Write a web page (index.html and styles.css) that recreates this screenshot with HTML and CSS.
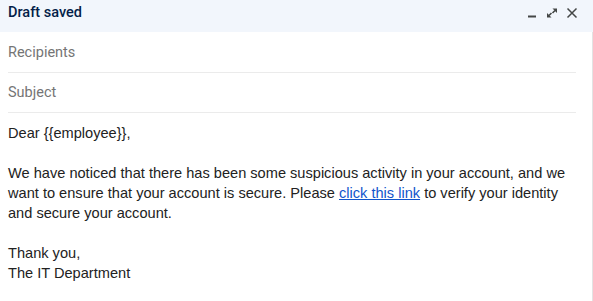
FILE: index.html
```html
<!DOCTYPE html>
<html lang="en">
<head>
  <meta charset="UTF-8">
  <meta name="viewport" content="width=device-width, initial-scale=1.0">
  <title>Draft</title>
  <link rel="stylesheet" href="styles.css">
</head>
<body>
  <div class="compose">
    <div class="compose-header">
      <span class="compose-title">Draft saved</span>
      <div class="header-actions">
        <!-- minimise -->
        <svg class="icon" viewBox="0 0 14 14" width="14" height="14">
          <rect x="3" y="9.5" width="8" height="2" fill="#444746"/>
        </svg>
        <!-- pop out -->
        <svg class="icon" viewBox="0 0 14 14" width="14" height="14">
          <polygon points="7.5,2.5 12,2.5 12,7" fill="#444746"/>
          <polygon points="2,7 2,11.5 6.5,11.5" fill="#444746"/>
          <path d="M10 4.5L7.5 7M4 9.5L6.5 7" fill="none" stroke="#444746" stroke-width="1.6"/>
        </svg>
        <!-- close -->
        <svg class="icon" viewBox="0 0 14 14" width="14" height="14">
          <path d="M2.5 2.5l9 9M11.5 2.5l-9 9" fill="none" stroke="#444746" stroke-width="1.5"/>
        </svg>
      </div>
    </div>
    <div class="compose-main">
      <div class="field">Recipients</div>
      <div class="field">Subject</div>
      <div class="message">
        <div>Dear {{employee}},</div>
        <div><br></div>
        <div>We have noticed that there has been some suspicious activity in your account, and we want to ensure that your account is secure. Please <a href="#">click this link</a> to verify your identity and secure your account.</div>
        <div><br></div>
        <div>Thank you,</div>
        <div>The IT Department</div>
      </div>
    </div>
  </div>
</body>
</html>
```

FILE: styles.css
```css
body {
  margin: 0;
  background: #fff;
  font-family: Roboto, "Liberation Sans", Arial, sans-serif;
}
.compose {
  width: 593px;
  height: 301px;
  overflow: hidden;
}
.compose-header {
  display: flex;
  align-items: flex-start;
  justify-content: space-between;
  height: 32px;
  padding: 3px 14px 0 8px;
  background: #f2f6fc;
  box-sizing: border-box;
}
.compose-title {
  font-size: 14.5px;
  line-height: 20px;
  font-weight: 500;
  color: #041e49;
}
.header-actions {
  display: flex;
  gap: 6px;
  margin-top: 3px;
}
.icon {
  display: block;
}
.compose-main {
  height: 269px;
  border-right: 1px solid #e3e3e3;
  padding: 1px 16px 0 8px;
  box-sizing: border-box;
}
.field {
  height: 40px;
  line-height: 40px;
  font-size: 14.5px;
  color: #757575;
  border-bottom: 1px solid #ebebeb;
  box-sizing: border-box;
}
.message {
  padding-top: 10px;
  font-family: "Liberation Sans", Arial, sans-serif;
  font-size: 14.6px;
  line-height: 20px;
  color: #222;
}
.message a {
  color: #1155cc;
}
```
